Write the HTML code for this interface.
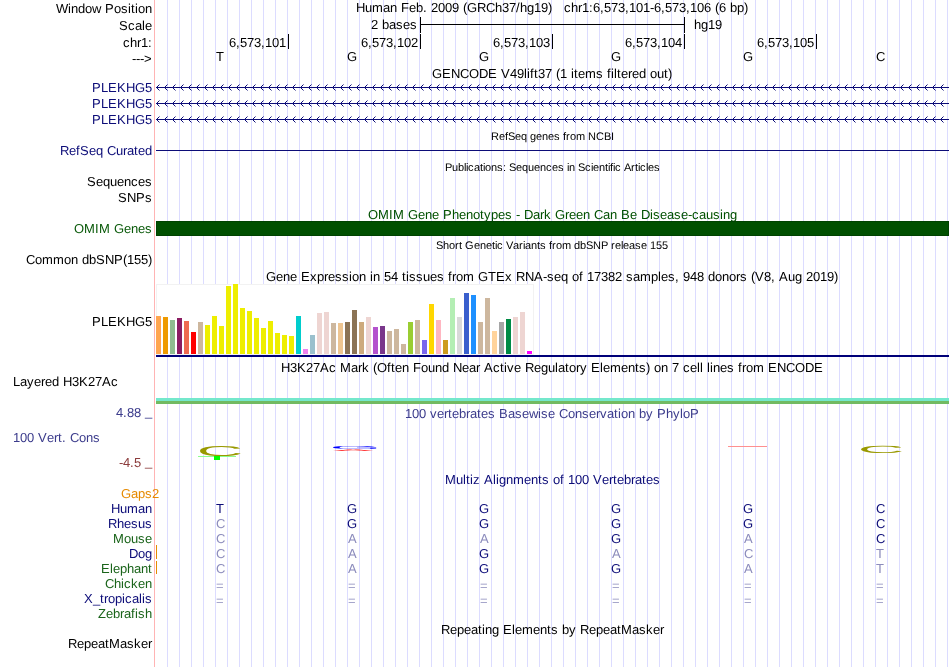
<!DOCTYPE html>
<html><head><meta charset="utf-8"><title>UCSC Genome Browser</title>
<style>
html,body{margin:0;padding:0;background:#fff;}
body{width:950px;height:667px;overflow:hidden;}
svg{display:block;will-change:transform;}
text{text-rendering:geometricPrecision;font-family:"Liberation Sans",Arial,Helvetica,sans-serif;font-size:13px;fill:#000;}
.s{font-size:11px;}
.r{text-anchor:end;}
.c{text-anchor:middle;}
.n{fill:#0c0c78;}
.l{fill:#8c8cbc;}
.g{fill:#1a641a;}
</style></head><body>
<svg width="950" height="667" viewBox="0 0 950 667">
<rect x="0" y="0" width="950" height="667" fill="#fff"/>
<g shape-rendering="crispEdges" fill="#dcdcff">
<rect x="167" y="0" width="1" height="667"/><rect x="179" y="0" width="1" height="667"/><rect x="191" y="0" width="1" height="667"/><rect x="203" y="0" width="1" height="667"/><rect x="215" y="0" width="1" height="667"/><rect x="227" y="0" width="1" height="667"/><rect x="239" y="0" width="1" height="667"/><rect x="251" y="0" width="1" height="667"/><rect x="263" y="0" width="1" height="667"/><rect x="275" y="0" width="1" height="667"/><rect x="287" y="0" width="1" height="667"/><rect x="299" y="0" width="1" height="667"/><rect x="311" y="0" width="1" height="667"/><rect x="323" y="0" width="1" height="667"/><rect x="335" y="0" width="1" height="667"/><rect x="347" y="0" width="1" height="667"/><rect x="359" y="0" width="1" height="667"/><rect x="371" y="0" width="1" height="667"/><rect x="383" y="0" width="1" height="667"/><rect x="395" y="0" width="1" height="667"/><rect x="407" y="0" width="1" height="667"/><rect x="419" y="0" width="1" height="667"/><rect x="431" y="0" width="1" height="667"/><rect x="443" y="0" width="1" height="667"/><rect x="455" y="0" width="1" height="667"/><rect x="467" y="0" width="1" height="667"/><rect x="479" y="0" width="1" height="667"/><rect x="491" y="0" width="1" height="667"/><rect x="503" y="0" width="1" height="667"/><rect x="515" y="0" width="1" height="667"/><rect x="527" y="0" width="1" height="667"/><rect x="539" y="0" width="1" height="667"/><rect x="551" y="0" width="1" height="667"/><rect x="563" y="0" width="1" height="667"/><rect x="575" y="0" width="1" height="667"/><rect x="587" y="0" width="1" height="667"/><rect x="599" y="0" width="1" height="667"/><rect x="611" y="0" width="1" height="667"/><rect x="623" y="0" width="1" height="667"/><rect x="635" y="0" width="1" height="667"/><rect x="647" y="0" width="1" height="667"/><rect x="659" y="0" width="1" height="667"/><rect x="671" y="0" width="1" height="667"/><rect x="683" y="0" width="1" height="667"/><rect x="695" y="0" width="1" height="667"/><rect x="707" y="0" width="1" height="667"/><rect x="719" y="0" width="1" height="667"/><rect x="731" y="0" width="1" height="667"/><rect x="743" y="0" width="1" height="667"/><rect x="755" y="0" width="1" height="667"/><rect x="767" y="0" width="1" height="667"/><rect x="779" y="0" width="1" height="667"/><rect x="791" y="0" width="1" height="667"/><rect x="803" y="0" width="1" height="667"/><rect x="815" y="0" width="1" height="667"/><rect x="827" y="0" width="1" height="667"/><rect x="839" y="0" width="1" height="667"/><rect x="851" y="0" width="1" height="667"/><rect x="863" y="0" width="1" height="667"/><rect x="875" y="0" width="1" height="667"/><rect x="887" y="0" width="1" height="667"/><rect x="899" y="0" width="1" height="667"/><rect x="911" y="0" width="1" height="667"/><rect x="923" y="0" width="1" height="667"/><rect x="935" y="0" width="1" height="667"/><rect x="947" y="0" width="1" height="667"/>
</g>
<rect x="154" y="0" width="1" height="667" fill="#ffb4b4" shape-rendering="crispEdges"/>
<text x="56 68 71 78 85 92 101 105 114 121 128 131 135 138 145" y="13">Window&#160;Position</text>
<text x="119 128 135 142 145" y="30">Scale</text>
<text x="123 130 137 141 148" y="47">chr1:</text>
<text x="132 136 140 144" y="63">---&gt;</text>
<text x="356 365 372 383 390 397 401 409 416 423 427 431 438 445 452 459 463 467 477 486 495 502 509 516 520 527 534 541 548 552 556 560 564 571 578 582 589 593 600 604 611 618 625 629 636 643 650 654 661 665 672 679 686 690 697 704 711 715 719 726 730 737 744" y="12">Human&#160;Feb.&#160;2009&#160;(GRCh37/hg19)   chr1:6,573,101-6,573,106&#160;(6&#160;bp)</text>
<text x="371 378 382 389 396 403 410" y="29">2&#160;bases</text>
<text x="694 701 708 715" y="29">hg19</text>
<g shape-rendering="crispEdges" fill="#000"><rect x="420" y="24" width="265" height="1"/><rect x="420" y="17" width="1" height="16"/><rect x="684" y="17" width="1" height="16"/><rect x="288" y="34" width="1" height="15"/><rect x="420" y="34" width="1" height="15"/><rect x="552" y="34" width="1" height="15"/><rect x="684" y="34" width="1" height="15"/><rect x="816" y="34" width="1" height="15"/></g>
<text x="229 236 240 247 254 261 265 272 279" y="47">6,573,101</text>
<text x="361 368 372 379 386 393 397 404 411" y="47">6,573,102</text>
<text x="493 500 504 511 518 525 529 536 543" y="47">6,573,103</text>
<text x="625 632 636 643 650 657 661 668 675" y="47">6,573,104</text>
<text x="757 764 768 775 782 789 793 800 807" y="47">6,573,105</text>
<text x="216" y="61">T</text>
<text x="347" y="61">G</text>
<text x="479" y="61">G</text>
<text x="611" y="61">G</text>
<text x="743" y="61">G</text>
<text x="876" y="61">C</text>
<text x="432 442 451 460 469 479 488 497 501 510 517 524 527 530 534 538 545 552 556 560 567 571 574 578 585 596 603 607 611 614 617 621 628 632 639 646 650 657 664 668" y="78">GENCODE&#160;V49lift37&#160;(1&#160;items&#160;filtered&#160;out)</text>
<text x="92 101 108 117 126 135 145" y="92" class="n">PLEKHG5</text>
<rect x="156" y="87" width="793" height="1" fill="#0c0c78" shape-rendering="crispEdges"/><path d="M156.5 87.5l3 -3M156.5 87.5l3 3M164.5 87.5l3 -3M164.5 87.5l3 3M172.5 87.5l3 -3M172.5 87.5l3 3M180.5 87.5l3 -3M180.5 87.5l3 3M188.5 87.5l3 -3M188.5 87.5l3 3M196.5 87.5l3 -3M196.5 87.5l3 3M204.5 87.5l3 -3M204.5 87.5l3 3M212.5 87.5l3 -3M212.5 87.5l3 3M220.5 87.5l3 -3M220.5 87.5l3 3M228.5 87.5l3 -3M228.5 87.5l3 3M236.5 87.5l3 -3M236.5 87.5l3 3M244.5 87.5l3 -3M244.5 87.5l3 3M252.5 87.5l3 -3M252.5 87.5l3 3M260.5 87.5l3 -3M260.5 87.5l3 3M268.5 87.5l3 -3M268.5 87.5l3 3M276.5 87.5l3 -3M276.5 87.5l3 3M284.5 87.5l3 -3M284.5 87.5l3 3M292.5 87.5l3 -3M292.5 87.5l3 3M300.5 87.5l3 -3M300.5 87.5l3 3M308.5 87.5l3 -3M308.5 87.5l3 3M316.5 87.5l3 -3M316.5 87.5l3 3M324.5 87.5l3 -3M324.5 87.5l3 3M332.5 87.5l3 -3M332.5 87.5l3 3M340.5 87.5l3 -3M340.5 87.5l3 3M348.5 87.5l3 -3M348.5 87.5l3 3M356.5 87.5l3 -3M356.5 87.5l3 3M364.5 87.5l3 -3M364.5 87.5l3 3M372.5 87.5l3 -3M372.5 87.5l3 3M380.5 87.5l3 -3M380.5 87.5l3 3M388.5 87.5l3 -3M388.5 87.5l3 3M396.5 87.5l3 -3M396.5 87.5l3 3M404.5 87.5l3 -3M404.5 87.5l3 3M412.5 87.5l3 -3M412.5 87.5l3 3M420.5 87.5l3 -3M420.5 87.5l3 3M428.5 87.5l3 -3M428.5 87.5l3 3M436.5 87.5l3 -3M436.5 87.5l3 3M444.5 87.5l3 -3M444.5 87.5l3 3M452.5 87.5l3 -3M452.5 87.5l3 3M460.5 87.5l3 -3M460.5 87.5l3 3M468.5 87.5l3 -3M468.5 87.5l3 3M476.5 87.5l3 -3M476.5 87.5l3 3M484.5 87.5l3 -3M484.5 87.5l3 3M492.5 87.5l3 -3M492.5 87.5l3 3M500.5 87.5l3 -3M500.5 87.5l3 3M508.5 87.5l3 -3M508.5 87.5l3 3M516.5 87.5l3 -3M516.5 87.5l3 3M524.5 87.5l3 -3M524.5 87.5l3 3M532.5 87.5l3 -3M532.5 87.5l3 3M540.5 87.5l3 -3M540.5 87.5l3 3M548.5 87.5l3 -3M548.5 87.5l3 3M556.5 87.5l3 -3M556.5 87.5l3 3M564.5 87.5l3 -3M564.5 87.5l3 3M572.5 87.5l3 -3M572.5 87.5l3 3M580.5 87.5l3 -3M580.5 87.5l3 3M588.5 87.5l3 -3M588.5 87.5l3 3M596.5 87.5l3 -3M596.5 87.5l3 3M604.5 87.5l3 -3M604.5 87.5l3 3M612.5 87.5l3 -3M612.5 87.5l3 3M620.5 87.5l3 -3M620.5 87.5l3 3M628.5 87.5l3 -3M628.5 87.5l3 3M636.5 87.5l3 -3M636.5 87.5l3 3M644.5 87.5l3 -3M644.5 87.5l3 3M652.5 87.5l3 -3M652.5 87.5l3 3M660.5 87.5l3 -3M660.5 87.5l3 3M668.5 87.5l3 -3M668.5 87.5l3 3M676.5 87.5l3 -3M676.5 87.5l3 3M684.5 87.5l3 -3M684.5 87.5l3 3M692.5 87.5l3 -3M692.5 87.5l3 3M700.5 87.5l3 -3M700.5 87.5l3 3M708.5 87.5l3 -3M708.5 87.5l3 3M716.5 87.5l3 -3M716.5 87.5l3 3M724.5 87.5l3 -3M724.5 87.5l3 3M732.5 87.5l3 -3M732.5 87.5l3 3M740.5 87.5l3 -3M740.5 87.5l3 3M748.5 87.5l3 -3M748.5 87.5l3 3M756.5 87.5l3 -3M756.5 87.5l3 3M764.5 87.5l3 -3M764.5 87.5l3 3M772.5 87.5l3 -3M772.5 87.5l3 3M780.5 87.5l3 -3M780.5 87.5l3 3M788.5 87.5l3 -3M788.5 87.5l3 3M796.5 87.5l3 -3M796.5 87.5l3 3M804.5 87.5l3 -3M804.5 87.5l3 3M812.5 87.5l3 -3M812.5 87.5l3 3M820.5 87.5l3 -3M820.5 87.5l3 3M828.5 87.5l3 -3M828.5 87.5l3 3M836.5 87.5l3 -3M836.5 87.5l3 3M844.5 87.5l3 -3M844.5 87.5l3 3M852.5 87.5l3 -3M852.5 87.5l3 3M860.5 87.5l3 -3M860.5 87.5l3 3M868.5 87.5l3 -3M868.5 87.5l3 3M876.5 87.5l3 -3M876.5 87.5l3 3M884.5 87.5l3 -3M884.5 87.5l3 3M892.5 87.5l3 -3M892.5 87.5l3 3M900.5 87.5l3 -3M900.5 87.5l3 3M908.5 87.5l3 -3M908.5 87.5l3 3M916.5 87.5l3 -3M916.5 87.5l3 3M924.5 87.5l3 -3M924.5 87.5l3 3M932.5 87.5l3 -3M932.5 87.5l3 3M940.5 87.5l3 -3M940.5 87.5l3 3" stroke="#0c0c78" stroke-width="1" fill="none" stroke-linecap="butt"/>
<text x="92 101 108 117 126 135 145" y="108" class="n">PLEKHG5</text>
<rect x="156" y="103" width="793" height="1" fill="#0c0c78" shape-rendering="crispEdges"/><path d="M156.5 103.5l3 -3M156.5 103.5l3 3M164.5 103.5l3 -3M164.5 103.5l3 3M172.5 103.5l3 -3M172.5 103.5l3 3M180.5 103.5l3 -3M180.5 103.5l3 3M188.5 103.5l3 -3M188.5 103.5l3 3M196.5 103.5l3 -3M196.5 103.5l3 3M204.5 103.5l3 -3M204.5 103.5l3 3M212.5 103.5l3 -3M212.5 103.5l3 3M220.5 103.5l3 -3M220.5 103.5l3 3M228.5 103.5l3 -3M228.5 103.5l3 3M236.5 103.5l3 -3M236.5 103.5l3 3M244.5 103.5l3 -3M244.5 103.5l3 3M252.5 103.5l3 -3M252.5 103.5l3 3M260.5 103.5l3 -3M260.5 103.5l3 3M268.5 103.5l3 -3M268.5 103.5l3 3M276.5 103.5l3 -3M276.5 103.5l3 3M284.5 103.5l3 -3M284.5 103.5l3 3M292.5 103.5l3 -3M292.5 103.5l3 3M300.5 103.5l3 -3M300.5 103.5l3 3M308.5 103.5l3 -3M308.5 103.5l3 3M316.5 103.5l3 -3M316.5 103.5l3 3M324.5 103.5l3 -3M324.5 103.5l3 3M332.5 103.5l3 -3M332.5 103.5l3 3M340.5 103.5l3 -3M340.5 103.5l3 3M348.5 103.5l3 -3M348.5 103.5l3 3M356.5 103.5l3 -3M356.5 103.5l3 3M364.5 103.5l3 -3M364.5 103.5l3 3M372.5 103.5l3 -3M372.5 103.5l3 3M380.5 103.5l3 -3M380.5 103.5l3 3M388.5 103.5l3 -3M388.5 103.5l3 3M396.5 103.5l3 -3M396.5 103.5l3 3M404.5 103.5l3 -3M404.5 103.5l3 3M412.5 103.5l3 -3M412.5 103.5l3 3M420.5 103.5l3 -3M420.5 103.5l3 3M428.5 103.5l3 -3M428.5 103.5l3 3M436.5 103.5l3 -3M436.5 103.5l3 3M444.5 103.5l3 -3M444.5 103.5l3 3M452.5 103.5l3 -3M452.5 103.5l3 3M460.5 103.5l3 -3M460.5 103.5l3 3M468.5 103.5l3 -3M468.5 103.5l3 3M476.5 103.5l3 -3M476.5 103.5l3 3M484.5 103.5l3 -3M484.5 103.5l3 3M492.5 103.5l3 -3M492.5 103.5l3 3M500.5 103.5l3 -3M500.5 103.5l3 3M508.5 103.5l3 -3M508.5 103.5l3 3M516.5 103.5l3 -3M516.5 103.5l3 3M524.5 103.5l3 -3M524.5 103.5l3 3M532.5 103.5l3 -3M532.5 103.5l3 3M540.5 103.5l3 -3M540.5 103.5l3 3M548.5 103.5l3 -3M548.5 103.5l3 3M556.5 103.5l3 -3M556.5 103.5l3 3M564.5 103.5l3 -3M564.5 103.5l3 3M572.5 103.5l3 -3M572.5 103.5l3 3M580.5 103.5l3 -3M580.5 103.5l3 3M588.5 103.5l3 -3M588.5 103.5l3 3M596.5 103.5l3 -3M596.5 103.5l3 3M604.5 103.5l3 -3M604.5 103.5l3 3M612.5 103.5l3 -3M612.5 103.5l3 3M620.5 103.5l3 -3M620.5 103.5l3 3M628.5 103.5l3 -3M628.5 103.5l3 3M636.5 103.5l3 -3M636.5 103.5l3 3M644.5 103.5l3 -3M644.5 103.5l3 3M652.5 103.5l3 -3M652.5 103.5l3 3M660.5 103.5l3 -3M660.5 103.5l3 3M668.5 103.5l3 -3M668.5 103.5l3 3M676.5 103.5l3 -3M676.5 103.5l3 3M684.5 103.5l3 -3M684.5 103.5l3 3M692.5 103.5l3 -3M692.5 103.5l3 3M700.5 103.5l3 -3M700.5 103.5l3 3M708.5 103.5l3 -3M708.5 103.5l3 3M716.5 103.5l3 -3M716.5 103.5l3 3M724.5 103.5l3 -3M724.5 103.5l3 3M732.5 103.5l3 -3M732.5 103.5l3 3M740.5 103.5l3 -3M740.5 103.5l3 3M748.5 103.5l3 -3M748.5 103.5l3 3M756.5 103.5l3 -3M756.5 103.5l3 3M764.5 103.5l3 -3M764.5 103.5l3 3M772.5 103.5l3 -3M772.5 103.5l3 3M780.5 103.5l3 -3M780.5 103.5l3 3M788.5 103.5l3 -3M788.5 103.5l3 3M796.5 103.5l3 -3M796.5 103.5l3 3M804.5 103.5l3 -3M804.5 103.5l3 3M812.5 103.5l3 -3M812.5 103.5l3 3M820.5 103.5l3 -3M820.5 103.5l3 3M828.5 103.5l3 -3M828.5 103.5l3 3M836.5 103.5l3 -3M836.5 103.5l3 3M844.5 103.5l3 -3M844.5 103.5l3 3M852.5 103.5l3 -3M852.5 103.5l3 3M860.5 103.5l3 -3M860.5 103.5l3 3M868.5 103.5l3 -3M868.5 103.5l3 3M876.5 103.5l3 -3M876.5 103.5l3 3M884.5 103.5l3 -3M884.5 103.5l3 3M892.5 103.5l3 -3M892.5 103.5l3 3M900.5 103.5l3 -3M900.5 103.5l3 3M908.5 103.5l3 -3M908.5 103.5l3 3M916.5 103.5l3 -3M916.5 103.5l3 3M924.5 103.5l3 -3M924.5 103.5l3 3M932.5 103.5l3 -3M932.5 103.5l3 3M940.5 103.5l3 -3M940.5 103.5l3 3" stroke="#0c0c78" stroke-width="1" fill="none" stroke-linecap="butt"/>
<text x="92 101 108 117 126 135 145" y="124" class="n">PLEKHG5</text>
<rect x="156" y="119" width="793" height="1" fill="#0c0c78" shape-rendering="crispEdges"/><path d="M156.5 119.5l3 -3M156.5 119.5l3 3M164.5 119.5l3 -3M164.5 119.5l3 3M172.5 119.5l3 -3M172.5 119.5l3 3M180.5 119.5l3 -3M180.5 119.5l3 3M188.5 119.5l3 -3M188.5 119.5l3 3M196.5 119.5l3 -3M196.5 119.5l3 3M204.5 119.5l3 -3M204.5 119.5l3 3M212.5 119.5l3 -3M212.5 119.5l3 3M220.5 119.5l3 -3M220.5 119.5l3 3M228.5 119.5l3 -3M228.5 119.5l3 3M236.5 119.5l3 -3M236.5 119.5l3 3M244.5 119.5l3 -3M244.5 119.5l3 3M252.5 119.5l3 -3M252.5 119.5l3 3M260.5 119.5l3 -3M260.5 119.5l3 3M268.5 119.5l3 -3M268.5 119.5l3 3M276.5 119.5l3 -3M276.5 119.5l3 3M284.5 119.5l3 -3M284.5 119.5l3 3M292.5 119.5l3 -3M292.5 119.5l3 3M300.5 119.5l3 -3M300.5 119.5l3 3M308.5 119.5l3 -3M308.5 119.5l3 3M316.5 119.5l3 -3M316.5 119.5l3 3M324.5 119.5l3 -3M324.5 119.5l3 3M332.5 119.5l3 -3M332.5 119.5l3 3M340.5 119.5l3 -3M340.5 119.5l3 3M348.5 119.5l3 -3M348.5 119.5l3 3M356.5 119.5l3 -3M356.5 119.5l3 3M364.5 119.5l3 -3M364.5 119.5l3 3M372.5 119.5l3 -3M372.5 119.5l3 3M380.5 119.5l3 -3M380.5 119.5l3 3M388.5 119.5l3 -3M388.5 119.5l3 3M396.5 119.5l3 -3M396.5 119.5l3 3M404.5 119.5l3 -3M404.5 119.5l3 3M412.5 119.5l3 -3M412.5 119.5l3 3M420.5 119.5l3 -3M420.5 119.5l3 3M428.5 119.5l3 -3M428.5 119.5l3 3M436.5 119.5l3 -3M436.5 119.5l3 3M444.5 119.5l3 -3M444.5 119.5l3 3M452.5 119.5l3 -3M452.5 119.5l3 3M460.5 119.5l3 -3M460.5 119.5l3 3M468.5 119.5l3 -3M468.5 119.5l3 3M476.5 119.5l3 -3M476.5 119.5l3 3M484.5 119.5l3 -3M484.5 119.5l3 3M492.5 119.5l3 -3M492.5 119.5l3 3M500.5 119.5l3 -3M500.5 119.5l3 3M508.5 119.5l3 -3M508.5 119.5l3 3M516.5 119.5l3 -3M516.5 119.5l3 3M524.5 119.5l3 -3M524.5 119.5l3 3M532.5 119.5l3 -3M532.5 119.5l3 3M540.5 119.5l3 -3M540.5 119.5l3 3M548.5 119.5l3 -3M548.5 119.5l3 3M556.5 119.5l3 -3M556.5 119.5l3 3M564.5 119.5l3 -3M564.5 119.5l3 3M572.5 119.5l3 -3M572.5 119.5l3 3M580.5 119.5l3 -3M580.5 119.5l3 3M588.5 119.5l3 -3M588.5 119.5l3 3M596.5 119.5l3 -3M596.5 119.5l3 3M604.5 119.5l3 -3M604.5 119.5l3 3M612.5 119.5l3 -3M612.5 119.5l3 3M620.5 119.5l3 -3M620.5 119.5l3 3M628.5 119.5l3 -3M628.5 119.5l3 3M636.5 119.5l3 -3M636.5 119.5l3 3M644.5 119.5l3 -3M644.5 119.5l3 3M652.5 119.5l3 -3M652.5 119.5l3 3M660.5 119.5l3 -3M660.5 119.5l3 3M668.5 119.5l3 -3M668.5 119.5l3 3M676.5 119.5l3 -3M676.5 119.5l3 3M684.5 119.5l3 -3M684.5 119.5l3 3M692.5 119.5l3 -3M692.5 119.5l3 3M700.5 119.5l3 -3M700.5 119.5l3 3M708.5 119.5l3 -3M708.5 119.5l3 3M716.5 119.5l3 -3M716.5 119.5l3 3M724.5 119.5l3 -3M724.5 119.5l3 3M732.5 119.5l3 -3M732.5 119.5l3 3M740.5 119.5l3 -3M740.5 119.5l3 3M748.5 119.5l3 -3M748.5 119.5l3 3M756.5 119.5l3 -3M756.5 119.5l3 3M764.5 119.5l3 -3M764.5 119.5l3 3M772.5 119.5l3 -3M772.5 119.5l3 3M780.5 119.5l3 -3M780.5 119.5l3 3M788.5 119.5l3 -3M788.5 119.5l3 3M796.5 119.5l3 -3M796.5 119.5l3 3M804.5 119.5l3 -3M804.5 119.5l3 3M812.5 119.5l3 -3M812.5 119.5l3 3M820.5 119.5l3 -3M820.5 119.5l3 3M828.5 119.5l3 -3M828.5 119.5l3 3M836.5 119.5l3 -3M836.5 119.5l3 3M844.5 119.5l3 -3M844.5 119.5l3 3M852.5 119.5l3 -3M852.5 119.5l3 3M860.5 119.5l3 -3M860.5 119.5l3 3M868.5 119.5l3 -3M868.5 119.5l3 3M876.5 119.5l3 -3M876.5 119.5l3 3M884.5 119.5l3 -3M884.5 119.5l3 3M892.5 119.5l3 -3M892.5 119.5l3 3M900.5 119.5l3 -3M900.5 119.5l3 3M908.5 119.5l3 -3M908.5 119.5l3 3M916.5 119.5l3 -3M916.5 119.5l3 3M924.5 119.5l3 -3M924.5 119.5l3 3M932.5 119.5l3 -3M932.5 119.5l3 3M940.5 119.5l3 -3M940.5 119.5l3 3" stroke="#0c0c78" stroke-width="1" fill="none" stroke-linecap="butt"/>
<text x="491 499 505 508 515 521 527 530 536 542 548 554 560 563 566 570 576 585 588 596 604 611" y="140" class="s">RefSeq&#160;genes&#160;from&#160;NCBI</text>
<text x="60 69 76 80 89 96 103 107 116 123 127 134 138 145" y="155" class="n">RefSeq&#160;Curated</text>
<rect x="156" y="150" width="793" height="1" fill="#0c0c78" shape-rendering="crispEdges"/>
<text x="445 452 458 464 466 468 474 480 483 485 491 497 503 506 509 516 522 528 534 540 546 552 558 564 567 569 575 578 585 591 593 599 605 608 610 613 615 621 624 631 635 638 640 646 648 654" y="171" class="s">Publications:&#160;Sequences&#160;in&#160;Scientific&#160;Articles</text>
<text x="87 96 103 110 117 124 131 138 145" y="186">Sequences</text>
<text x="118 127 136 145" y="202">SNPs</text>
<text x="368 378 389 393 404 408 418 425 432 439 443 452 459 466 473 480 484 491 498 505 512 516 520 524 533 540 544 551 555 565 569 576 583 590 594 603 610 617 621 630 637 641 650 653 660 667 674 681 688 692 699 706 713 720 723 730" y="219" style="fill:#005000">OMIM&#160;Gene&#160;Phenotypes&#160;-&#160;Dark&#160;Green&#160;Can&#160;Be&#160;Disease-causing</text>
<text x="74 84 95 99 110 114 124 131 138 145" y="233" style="fill:#0a5a0a">OMIM&#160;Genes</text>
<rect x="156" y="221" width="793" height="15" fill="#004200" shape-rendering="crispEdges"/><rect x="157" y="222" width="791" height="13" fill="#005000" shape-rendering="crispEdges"/>
<text x="436 443 449 455 459 462 465 474 480 486 492 495 497 503 506 513 519 523 525 531 537 540 546 549 552 556 562 571 574 580 586 593 601 608 611 615 621 623 629 635 641 647 650 656 662" y="249" class="s">Short&#160;Genetic&#160;Variants&#160;from&#160;dbSNP&#160;release&#160;155</text>
<text x="26 35 42 53 64 71 78 82 89 96 105 114 123 127 134 141 148" y="264">Common&#160;dbSNP(155)</text>
<text x="266 276 283 290 297 301 310 317 324 328 335 342 349 352 359 366 370 373 380 384 391 398 402 406 409 416 423 430 437 444 448 452 456 463 474 478 488 496 505 512 516 525 534 543 547 554 561 568 572 579 583 587 594 601 608 615 622 626 633 640 651 658 661 668 675 679 683 690 697 704 708 715 722 729 736 740 747 751 755 764 771 775 779 788 795 802 806 813 820 827 834" y="281">Gene&#160;Expression&#160;in&#160;54&#160;tissues&#160;from&#160;GTEx&#160;RNA-seq&#160;of&#160;17382&#160;samples,&#160;948&#160;donors&#160;(V8,&#160;Aug&#160;2019)</text>
<text x="92 101 108 117 126 135 145" y="326">PLEKHG5</text>
<g shape-rendering="crispEdges"><rect x="156" y="284" width="378" height="71" fill="#f2f2f2"/><rect x="157" y="285" width="376" height="69" fill="#fff"/><rect x="156" y="355" width="793" height="2" fill="#000078"/><rect x="156" y="316" width="5" height="38" fill="#FFA54F"/><rect x="163" y="317" width="5" height="37" fill="#EE9A00"/><rect x="170" y="320" width="5" height="34" fill="#8FBC8F"/><rect x="177" y="318" width="5" height="36" fill="#8B1C62"/><rect x="184" y="321" width="5" height="33" fill="#EE6A50"/><rect x="191" y="332" width="5" height="22" fill="#FF0000"/><rect x="198" y="322" width="5" height="32" fill="#CDB79E"/><rect x="205" y="325" width="5" height="29" fill="#EEEE00"/><rect x="212" y="316" width="5" height="38" fill="#EEEE00"/><rect x="219" y="326" width="5" height="28" fill="#EEEE00"/><rect x="226" y="286" width="5" height="68" fill="#EEEE00"/><rect x="233" y="284" width="5" height="70" fill="#EEEE00"/><rect x="240" y="308" width="5" height="46" fill="#EEEE00"/><rect x="247" y="311" width="5" height="43" fill="#EEEE00"/><rect x="254" y="318" width="5" height="36" fill="#EEEE00"/><rect x="261" y="328" width="5" height="26" fill="#EEEE00"/><rect x="268" y="321" width="5" height="33" fill="#EEEE00"/><rect x="275" y="333" width="5" height="21" fill="#EEEE00"/><rect x="282" y="335" width="5" height="19" fill="#EEEE00"/><rect x="289" y="336" width="5" height="18" fill="#EEEE00"/><rect x="296" y="316" width="5" height="38" fill="#00CDCD"/><rect x="303" y="349" width="5" height="5" fill="#EE82EE"/><rect x="310" y="335" width="5" height="19" fill="#9AC0CD"/><rect x="317" y="313" width="5" height="41" fill="#EED5D2"/><rect x="324" y="312" width="5" height="42" fill="#EED5D2"/><rect x="331" y="323" width="5" height="31" fill="#CDB79E"/><rect x="338" y="323" width="5" height="31" fill="#EEC591"/><rect x="345" y="322" width="5" height="32" fill="#8B7355"/><rect x="352" y="310" width="5" height="44" fill="#8B7355"/><rect x="359" y="322" width="5" height="32" fill="#CDAA7D"/><rect x="366" y="317" width="5" height="37" fill="#EED5D2"/><rect x="373" y="327" width="5" height="27" fill="#B452CD"/><rect x="380" y="326" width="5" height="28" fill="#7A378B"/><rect x="387" y="331" width="5" height="23" fill="#CDB79E"/><rect x="394" y="329" width="5" height="25" fill="#CDB79E"/><rect x="401" y="344" width="5" height="10" fill="#CDB79E"/><rect x="408" y="322" width="5" height="32" fill="#9ACD32"/><rect x="415" y="320" width="5" height="34" fill="#CDB79E"/><rect x="422" y="340" width="5" height="14" fill="#7A67EE"/><rect x="429" y="304" width="5" height="50" fill="#FFD700"/><rect x="436" y="320" width="5" height="34" fill="#FFB6C1"/><rect x="443" y="340" width="5" height="14" fill="#CD9B1D"/><rect x="450" y="298" width="5" height="56" fill="#B4EEB4"/><rect x="457" y="317" width="5" height="37" fill="#D9D9D9"/><rect x="464" y="293" width="5" height="61" fill="#3A5FCD"/><rect x="471" y="295" width="5" height="59" fill="#1E90FF"/><rect x="478" y="322" width="5" height="32" fill="#CDB79E"/><rect x="485" y="298" width="5" height="56" fill="#CDB79E"/><rect x="492" y="331" width="5" height="23" fill="#FFD39B"/><rect x="499" y="322" width="5" height="32" fill="#A6A6A6"/><rect x="506" y="319" width="5" height="35" fill="#008B45"/><rect x="513" y="317" width="5" height="37" fill="#EED5D2"/><rect x="520" y="312" width="5" height="42" fill="#EED5D2"/><rect x="527" y="351" width="5" height="3" fill="#FF00FF"/></g>
<text x="281 290 297 306 313 320 329 336 340 351 358 362 369 373 377 387 391 395 402 409 413 421 428 435 442 449 453 462 469 476 480 484 493 500 504 507 514 521 525 534 541 548 555 558 565 569 576 580 587 591 600 603 610 621 628 635 639 646 650 654 661 668 672 679 683 690 697 700 703 707 710 713 720 727 734 738 742 746 753 764 768 777 786 795 805 814" y="372">H3K27Ac&#160;Mark&#160;(Often&#160;Found&#160;Near&#160;Active&#160;Regulatory&#160;Elements)&#160;on&#160;7&#160;cell&#160;lines&#160;from&#160;ENCODE</text>
<text x="13 20 27 34 41 45 52 59 63 72 79 88 95 102 111" y="386">Layered&#160;H3K27Ac</text>
<g shape-rendering="crispEdges"><rect x="156" y="398" width="793" height="3" fill="#74e8cc"/><rect x="156" y="401" width="793" height="3" fill="#72ba62"/></g>
<text x="405 412 419 426 430 437 444 448 452 459 466 470 477 481 488 495 499 508 515 522 529 538 541 548 555 559 568 575 582 589 596 600 607 614 618 621 628 635 639 646 653 657 666 673 680 683 690" y="418" style="fill:#3c3c8c">100&#160;vertebrates&#160;Basewise&#160;Conservation&#160;by&#160;PhyloP</text>
<text x="116 123 127 134" y="417" style="fill:#3c3c8c">4.88</text>
<text x="145" y="416" style="fill:#3c3c8c">_</text>
<text x="13 20 27 34 38 47 54 58 62 66 70 79 86 93" y="442" style="fill:#3c3c8c">100&#160;Vert.&#160;Cons</text>
<text x="119 123 130 134" y="467" style="fill:#8c3c3c">-4.5</text>
<text x="145" y="466" style="fill:#8c3c3c">_</text>
<text x="0" y="0" transform="translate(196.736 455.659) scale(0.6427 0.1441)" style="font-size:100px;text-rendering:geometricPrecision;fill:#999900;opacity:1;">C</text>
<rect x="198" y="456" width="38" height="1" fill="#8cff8c" shape-rendering="crispEdges"/><rect x="214" y="456" width="6" height="4" fill="#00ff00" shape-rendering="crispEdges"/>
<text x="0" y="0" transform="translate(331.382 451.000) scale(0.6032 0.0233)" style="font-size:100px;text-rendering:geometricPrecision;fill:#ff0000;opacity:0.9;font-weight:bold;">A</text>
<text x="0" y="0" transform="translate(329.687 449.057) scale(0.6587 0.0438)" style="font-size:100px;text-rendering:geometricPrecision;fill:#0000ff;opacity:1;">G</text>
<rect x="728" y="446" width="39" height="1" fill="#ff9090" shape-rendering="crispEdges"/>
<text x="0" y="0" transform="translate(857.728 453.197) scale(0.6442 0.1059)" style="font-size:100px;text-rendering:geometricPrecision;fill:#999900;opacity:1;">C</text>
<text x="445 456 463 466 470 473 480 484 493 496 499 506 513 524 531 538 542 549 553 560 564 568 575 582 589 593 602 609 613 617 624 631 635 642 646 653" y="484" class="n">Multiz&#160;Alignments&#160;of&#160;100&#160;Vertebrates</text>
<text x="121 131 138 145 152" y="498" style="fill:#e68a00">Gaps2</text>
<text x="111 120 127 138 145" y="513" class="n">Human</text>
<text x="216" y="513" class="n">T</text>
<text x="347" y="513" class="n">G</text>
<text x="479" y="513" class="n">G</text>
<text x="611" y="513" class="n">G</text>
<text x="743" y="513" class="n">G</text>
<text x="876" y="513" class="n">C</text>
<text x="108 117 124 131 138 145" y="528" class="n">Rhesus</text>
<text x="216" y="528" class="l">C</text>
<text x="347" y="528" class="n">G</text>
<text x="479" y="528" class="n">G</text>
<text x="611" y="528" class="n">G</text>
<text x="743" y="528" class="n">G</text>
<text x="876" y="528" class="n">C</text>
<text x="113 124 131 138 145" y="543" class="g">Mouse</text>
<text x="216" y="543" class="l">C</text>
<text x="348" y="543" class="l">A</text>
<text x="480" y="543" class="l">A</text>
<text x="611" y="543" class="n">G</text>
<text x="744" y="543" class="l">A</text>
<text x="876" y="543" class="n">C</text>
<text x="129 138 145" y="558" class="n">Dog</text>
<text x="216" y="558" class="l">C</text>
<text x="348" y="558" class="l">A</text>
<text x="479" y="558" class="n">G</text>
<text x="612" y="558" class="l">A</text>
<text x="744" y="558" class="l">C</text>
<text x="876" y="558" class="l">T</text>
<text x="101 110 113 120 127 134 141 148" y="573" class="g">Elephant</text>
<text x="216" y="573" class="l">C</text>
<text x="348" y="573" class="l">A</text>
<text x="479" y="573" class="n">G</text>
<text x="611" y="573" class="n">G</text>
<text x="744" y="573" class="l">A</text>
<text x="876" y="573" class="l">T</text>
<text x="105 114 121 124 131 138 145" y="588" class="g">Chicken</text>
<text x="216" y="590" class="l">=</text>
<text x="348" y="590" class="l">=</text>
<text x="480" y="590" class="l">=</text>
<text x="612" y="590" class="l">=</text>
<text x="744" y="590" class="l">=</text>
<text x="876" y="590" class="l">=</text>
<text x="84 93 100 104 108 115 122 125 132 139 142 145" y="603" class="n">X_tropicalis</text>
<text x="216" y="605" class="l">=</text>
<text x="348" y="605" class="l">=</text>
<text x="480" y="605" class="l">=</text>
<text x="612" y="605" class="l">=</text>
<text x="744" y="605" class="l">=</text>
<text x="876" y="605" class="l">=</text>
<text x="98 106 113 120 124 131 135 138 145" y="618" class="g">Zebrafish</text>
<g shape-rendering="crispEdges" fill="#e68a00"><rect x="156" y="545" width="1" height="14"/><rect x="156" y="561" width="1" height="13"/></g>
<text x="441 450 457 464 471 478 482 485 492 499 503 512 515 522 533 540 547 551 558 562 569 576 580 589 596 603 610 617 621 632 639 646 653 660" y="634">Repeating&#160;Elements&#160;by&#160;RepeatMasker</text>
<text x="68 77 84 91 98 105 109 120 127 134 141 148" y="648">RepeatMasker</text>
</svg>
</body></html>
